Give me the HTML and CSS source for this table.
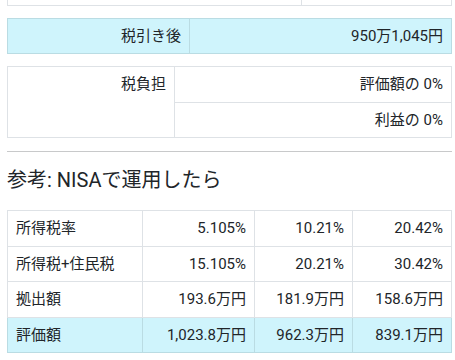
FILE: index.html
```html
<!DOCTYPE html>
<html lang="ja">
<head>
<meta charset="utf-8">
<link rel="stylesheet" href="styles.css">
</head>
<body>
<div class="wrap">
  <table class="tbl tbl-top">
    <colgroup><col class="c294"><col></colgroup>
    <tr><td class="r">&nbsp;</td><td class="r">&nbsp;</td></tr>
  </table>

  <table class="tbl">
    <colgroup><col class="c182"><col></colgroup>
    <tr class="info"><td class="r">税引き後</td><td class="r">950万1,045円</td></tr>
  </table>

  <table class="tbl">
    <colgroup><col class="c167"><col></colgroup>
    <tr><td class="r top" rowspan="2">税負担</td><td class="r">評価額の 0%</td></tr>
    <tr><td class="r">利益の 0%</td></tr>
  </table>

  <hr class="sep">

  <h2 class="heading">参考: NISAで運用したら</h2>

  <table class="tbl">
    <colgroup><col class="c135"><col class="c112"><col class="c98"><col></colgroup>
    <tr><td>所得税率</td><td class="r">5.105%</td><td class="r">10.21%</td><td class="r">20.42%</td></tr>
    <tr><td>所得税+住民税</td><td class="r">15.105%</td><td class="r">20.21%</td><td class="r">30.42%</td></tr>
    <tr><td>拠出額</td><td class="r">193.6万円</td><td class="r">181.9万円</td><td class="r">158.6万円</td></tr>
    <tr class="info"><td>評価額</td><td class="r">1,023.8万円</td><td class="r">962.3万円</td><td class="r">839.1万円</td></tr>
  </table>
</div>
</body>
</html>
```

FILE: styles.css
```css
html, body {
  margin: 0;
  padding: 0;
  background: #ffffff;
}

body {
  font-family: Roboto, "Noto Sans CJK JP", sans-serif;
  font-size: 15px;
  line-height: 1.5;
  color: #212529;
  overflow: hidden;
}

.wrap {
  margin-left: 7px;
  width: 445px;
}

.tbl {
  width: 100%;
  border-collapse: collapse;
  table-layout: fixed;
  margin: 0 0 12px 0;
}

.tbl td {
  border: 1px solid #dee2e6;
  padding: 6px 8px;
  vertical-align: middle;
  white-space: nowrap;
}

.tbl-top {
  margin-top: -31px;
}

.tbl .r {
  text-align: right;
}

.tbl .top {
  vertical-align: top;
}

.tbl .info td {
  background: #cff4fc;
  border-color: #badce3;
}

.c294 { width: 294px; }
.c182 { width: 182px; }
.c167 { width: 167px; }
.c135 { width: 135px; }
.c112 { width: 112px; }
.c98 { width: 98px; }

.sep {
  margin: 13px 0 0 0;
  border: 0;
  border-top: 1px solid #c8c9ca;
  height: 0;
}

.heading {
  font-size: 20px;
  font-weight: 400;
  line-height: 1.2;
  margin: 16px 0 18px 0;
}
```
